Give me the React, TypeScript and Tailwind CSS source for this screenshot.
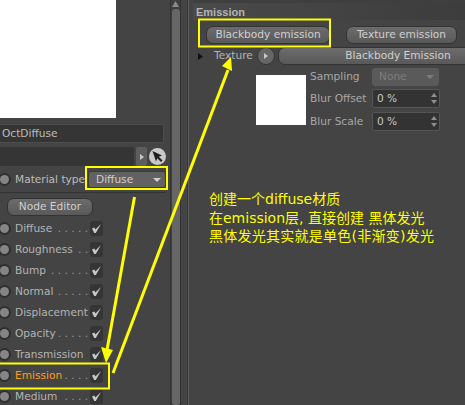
const ui = { fontFamily: '"DejaVu Sans", sans-serif' };

const channels = [
  { label: 'Diffuse', dots: '. . . . .' },
  { label: 'Roughness', dots: '. .' },
  { label: 'Bump', dots: '. . . . . .' },
  { label: 'Normal', dots: '. . . . .' },
  { label: 'Displacement', dots: '' },
  { label: 'Opacity', dots: '. . . . .' },
  { label: 'Transmission', dots: '' },
  { label: 'Emission', dots: '. . . .', active: true },
  { label: 'Medium', dots: '. . . .' },
];

const Radio = () => (
  <span className="flex h-[13px] w-[13px] shrink-0 items-center justify-center rounded-full bg-[#2f2f2f]">
    <span className="h-[9px] w-[9px] rounded-full bg-[#858585]" />
  </span>
);

const Check = () => (
  <span className="flex h-[15px] w-[13px] shrink-0 items-center justify-center rounded-[3px] bg-[#353535]">
    <svg width="11" height="11" viewBox="0 0 11 11">
      <path d="M1 5.5 L3.2 10 L4.8 10 L10 1 L4.4 6.4 L3.4 4.4 Z" fill="#c8c8c8" />
    </svg>
  </span>
);

const PillButton = ({ label, className }: { label: string; className: string }) => (
  <div
    className={`flex h-[18px] shrink-0 items-center justify-center rounded-[7px] border border-[#333] bg-gradient-to-b from-[#6c6c6c] to-[#595959] text-[10.6px] text-[#d0d0d0] ${className}`}
  >
    {label}
  </div>
);

const Stepper = ({ value }: { value: string }) => (
  <div className="flex h-[19px] w-[68px] items-center justify-between rounded-[2px] border border-[#555] bg-[#333] pl-[4px] pr-[2px] text-[10.6px] text-[#c8c8c8]">
    {value}
    <svg width="6" height="11" viewBox="0 0 6 11">
      <path d="M3 0 L6 4 L0 4 Z M0 7 L6 7 L3 11 Z" fill="#8f8f8f" />
    </svg>
  </div>
);

const Annotations = () => (
  <svg className="pointer-events-none absolute left-0 top-0" width="465" height="405" viewBox="0 0 465 405">
    <g fill="none" stroke="#ffff00" strokeWidth="2">
      <rect x="86" y="167" width="81" height="22" />
      <rect x="199" y="19.5" width="131" height="27" />
      <rect x="-2" y="363.5" width="111" height="25" />
      <path d="M134.5 197 L107 350" strokeWidth="3" />
      <path d="M113 373 L228 70" strokeWidth="3" />
    </g>
    <path d="M106 363 L101 347 L113 350 Z" fill="#ffff00" />
    <path d="M231 57 L232 71 L222 66 Z" fill="#ffff00" />
  </svg>
);

export default function App() {
  return (
    <div className="relative flex h-[405px] w-[465px] overflow-hidden bg-[#444444]" style={ui}>
      {/* material list */}
      <div className="flex w-[170px] shrink-0 flex-col">
        <div className="h-[118px] w-[116px] shrink-0 bg-white" />
        <div className="mt-[6px] flex h-[19px] w-[164px] shrink-0 items-center rounded-r-[2px] border border-l-0 border-[#4e4e4e] bg-[#353535] pl-[2px] text-[10.6px] text-[#bdbdbd]">
          OctDiffuse
        </div>
        <div className="mt-[4px] flex h-[19px] shrink-0 items-center">
          <div className="h-full w-[134px] bg-[#353535]" />
          <div className="ml-[2px] flex h-full w-[11px] items-center justify-center rounded-[2px] bg-[#5d5d5d]">
            <svg width="4" height="6" viewBox="0 0 4 6"><path d="M0 0 L4 3 L0 6 Z" fill="#c8c8c8" /></svg>
          </div>
          <div className="ml-[2px] flex h-[17px] w-[17px] items-center justify-center rounded-full bg-[#c9c9c9]">
            <svg width="13" height="13" viewBox="0 0 13 13">
              <path d="M1.5 1 L11 5.5 L7.8 6.8 L11.5 10.5 L10 12 L6.4 8.2 L5 11.5 Z" fill="#1d1d1d" />
            </svg>
          </div>
        </div>
        <div className="mt-[3px] flex h-[21px] shrink-0 items-center">
          <div className="-ml-[2px]"><Radio /></div>
          <span className="ml-[4px] w-[73px] whitespace-nowrap text-[10.6px] text-[#bdbdbd]">Material type</span>
          <div className="flex h-[17px] w-[78px] items-center justify-between rounded-[3px] border border-[#3a3a3a] bg-[#626262] pl-[7px] pr-[4px] text-[10.6px] text-[#d0d0d0]">
            Diffuse
            <svg width="8" height="4" viewBox="0 0 8 4"><path d="M0 0 L8 0 L4 4 Z" fill="#d0d0d0" /></svg>
          </div>
        </div>
        <div className="mt-[2px] h-px w-[166px] shrink-0 bg-[#333]" />
        <PillButton label="Node Editor" className="mt-[5px] w-[86px] translate-x-[7px]" />
        <div className="mt-[2px] flex shrink-0 flex-col">
          {channels.map((c) => (
            <div key={c.label} className="flex h-[21px] w-[103px] shrink-0 items-center">
              <div className="-ml-[2px]"><Radio /></div>
              <span className={`ml-[4px] whitespace-nowrap text-[10.6px] ${c.active ? 'text-[#ff9c1a]' : 'text-[#b4b4b4]'}`}>
                {c.label}
              </span>
              <span className="ml-auto mr-[2px] whitespace-nowrap text-[10.6px] text-[#9a9a9a]">{c.dots}</span>
              <Check />
            </div>
          ))}
        </div>
      </div>

      {/* scrollbar */}
      <div className="relative h-full w-[11px] shrink-0 border-x border-[#333] bg-[#3e3e3e]">
        <svg className="absolute left-[1px] top-[1px]" width="7" height="6" viewBox="0 0 7 6"><path d="M3.5 0 L7 6 L0 6 Z" fill="#8a8a8a" /></svg>
        <div className="mx-auto mt-[9px] h-[396px] w-[8px] rounded-[3px] bg-[#666]" />
      </div>
      <div className="h-full w-[7px] shrink-0 border-r border-[#383838] bg-[#444]" />
      <div className="h-full w-[5px] shrink-0 border-l border-[#5e5e5e] bg-[#444]" />

      {/* emission panel */}
      <div className="relative flex flex-1 flex-col">
        <div className="h-[3px] shrink-0 bg-[#3f3f3f]" />
        <div className="flex h-[17px] shrink-0 items-center bg-gradient-to-r from-[#4a4a4a] to-[#3a3a3a] pl-[3px] pt-[1px] text-[11px] font-bold text-[#b4b4b4]" style={{ fontFamily: '"Liberation Sans", sans-serif' }}>Emission</div>
        <div className="mt-[6px] flex shrink-0 gap-[16px] pl-[13px]">
          <PillButton label="Blackbody emission" className="w-[124px]" />
          <PillButton label="Texture emission" className="w-[111px]" />
        </div>
        <div className="mt-[3px] flex h-[18px] shrink-0 items-center">
          <svg className="ml-[5px]" width="5" height="7" viewBox="0 0 5 7"><path d="M0 0 L5 3.5 L0 7 Z" fill="#111" />
          </svg>
          <span className="ml-[11px] w-[43px] text-[10.6px] text-[#b4b4b4]">Texture</span>
          <div className="flex h-[18px] w-[18px] items-center justify-center rounded-full border border-[#333] bg-[#666666]">
            <svg width="4" height="6" viewBox="0 0 4 6"><path d="M0 0 L4 3 L0 6 Z" fill="#c8c8c8" /></svg>
          </div>
          <PillButton label="Blackbody Emission" className="ml-[3px] w-[240px]" />
        </div>
        <div className="mt-[3px] flex shrink-0 pl-[63px]">
          <div className="mt-[7px] h-[50px] w-[50px] bg-white" />
          <div className="ml-[4px] flex flex-col">
            <div className="flex h-[18px] items-center">
              <span className="w-[62px] text-[10.6px] text-[#a8a8a8]">Sampling</span>
              <div className="flex h-[18px] w-[67px] items-center justify-between rounded-[3px] bg-[#5a5a5a] pl-[7px] pr-[5px] text-[10.6px] text-[#7d7d7d]">
                None
                <svg width="8" height="4" viewBox="0 0 8 4"><path d="M0 0 L8 0 L4 4 Z" fill="#7d7d7d" /></svg>
              </div>
            </div>
            <div className="mt-[3px] flex h-[19px] items-center">
              <span className="w-[62px] text-[10.6px] text-[#a8a8a8]">Blur Offset</span>
              <Stepper value="0 %" />
            </div>
            <div className="mt-[4px] flex h-[19px] items-center">
              <span className="w-[62px] text-[10.6px] text-[#a8a8a8]">Blur Scale</span>
              <Stepper value="0 %" />
            </div>
          </div>
        </div>
        <div
          className="ml-[16px] mt-[59px] shrink-0 whitespace-nowrap text-[14px] leading-[18.5px] text-[#ffff00]"
          style={{ fontFamily: '"DejaVu Sans", "Noto Sans CJK SC", sans-serif' }}
        >
          <p>创建一个diffuse材质</p>
          <p>在emission层, 直接创建 黑体发光</p>
          <p className="tracking-[0.25px]">黑体发光其实就是单色(非渐变)发光</p>
        </div>
      </div>
      <Annotations />
    </div>
  );
}
